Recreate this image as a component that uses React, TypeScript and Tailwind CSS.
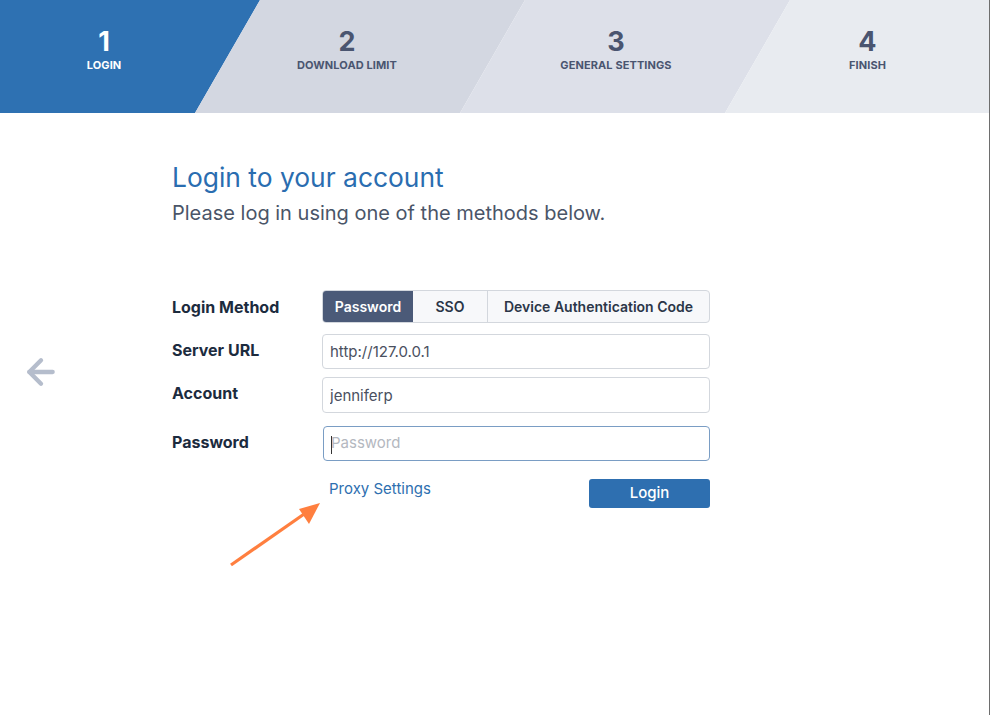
import { ArrowLeft } from "lucide-react";

const steps = [
  { n: "1", label: "Login", active: true, col: "w-[208px]" },
  { n: "2", label: "Download Limit", active: false, col: "w-[278px]" },
  { n: "3", label: "General Settings", active: false, col: "w-[260px]" },
  { n: "4", label: "Finish", active: false, col: "flex-1" },
];

const Stepper = () => (
  <div className="relative h-[113px]">
    {/* slanted step backgrounds */}
    <svg className="absolute inset-0" width="989" height="113" viewBox="0 0 989 113">
      <polygon points="0,0 260,0 195,113 0,113" fill="#2e71b2" />
      <polygon points="260,0 525,0 460,113 195,113" fill="#d3d7e1" />
      <polygon points="525,0 790,0 725,113 460,113" fill="#dde0e9" />
      <polygon points="790,0 989,0 989,113 725,113" fill="#e8ebf0" />
    </svg>
    <div className="relative flex h-full">
      {steps.map((s) => (
        <div key={s.n} className={`${s.col} flex flex-col items-center pt-[26px]`}>
          <span
            className={`text-[27px] font-bold leading-[32px] ${s.active ? "text-white" : "text-[#4a5570]"}`}
          >
            {s.n}
          </span>
          <span
            className={`text-[11px] font-bold uppercase leading-[14px] tracking-[0.1px] ${s.active ? "text-white" : "text-[#4a5570]"}`}
          >
            {s.label}
          </span>
        </div>
      ))}
    </div>
  </div>
);

export default function App() {
  return (
    <div
      className="relative h-[715px] w-[990px] overflow-hidden border-r border-[#6e6e6e] bg-white"
      style={{ fontFamily: "Inter, 'Noto Sans', sans-serif" }}
    >
      <Stepper />

      {/* back arrow */}
      <button className="absolute left-[21px] top-[352px] text-[#b5bdcc]">
        <ArrowLeft size={40} strokeWidth={2.6} />
      </button>

      <div className="ml-[172px] w-[538px] pt-[48px]">
        <h1 className="text-[26.4px] leading-[32px] text-[#2a6db0]">Login to your account</h1>
        <p className="mt-[7px] text-[20px] leading-[26px] text-[#4a5568]">
          Please log in using one of the methods below.
        </p>

        <div className="mt-[64px] grid grid-cols-[150px_1fr] items-center text-[16px]">
          <label className="font-bold text-[#1c2b3e]">Login Method</label>
          <div className="flex h-[33px] overflow-hidden rounded-[4px] border border-[#d3d7dd] bg-[#f7f8fa] text-[14px] font-semibold text-[#2b3648]">
            <button className="w-[90px] bg-[#4b5a78] text-white">Password</button>
            <button className="w-[75px] border-r border-[#d3d7dd]">SSO</button>
            <button className="flex-1">Device Authentication Code</button>
          </div>

          <label className="mt-[11px] -translate-y-[2px] font-bold text-[#1c2b3e]">Server URL</label>
          <input
            readOnly
            value="http://127.0.0.1"
            className="mt-[11px] h-[35px] rounded-[4px] border border-[#d3d7dd] px-[7px] text-[15px] text-[#4a5060] outline-none"
          />

          <label className="mt-[8px] -translate-y-[2px] font-bold text-[#1c2b3e]">Account</label>
          <input
            readOnly
            value="jenniferp"
            className="mt-[8px] h-[36px] rounded-[4px] border border-[#d3d7dd] px-[7px] text-[15px] text-[#4a5060] outline-none"
          />

          <label className="mt-[13px] -translate-y-[2px] font-bold text-[#1c2b3e]">Password</label>
          <div className="relative mt-[13px] ml-px flex h-[35px] items-center rounded-[4px] border border-[#7a9dc4] px-[7px]">
            <span className="absolute left-[7px] top-[9px] h-[18px] w-px bg-[#333]" />
            <span className="text-[15px] text-[#b4b8bf]">Password</span>
          </div>

          <div />
          <div className="mt-[18px] flex items-center justify-between">
            <a className="ml-[7px] -mt-[8px] text-[15px] text-[#2e6fb0]">Proxy Settings</a>
            <button className="h-[29px] w-[121px] rounded-[3px] bg-[#2e6fb0] text-[15px] font-medium text-white">
              Login
            </button>
          </div>
        </div>
      </div>

      {/* annotation arrow */}
      <svg className="absolute left-[225px] top-[498px]" width="100" height="72" viewBox="0 0 100 72">
        <line x1="6" y1="67" x2="82" y2="14" stroke="#ff7f3f" strokeWidth="3.2" />
        <polygon points="95,5 74,11 84,26" fill="#ff7f3f" />
      </svg>
    </div>
  );
}
